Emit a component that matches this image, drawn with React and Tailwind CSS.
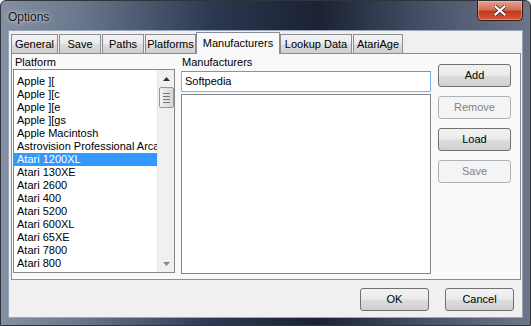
import React from 'react';

const platforms = [
    'Apple ][',
    'Apple ][c',
    'Apple ][e',
    'Apple ][gs',
    'Apple Macintosh',
    'Astrovision Professional Arcade',
    'Atari 1200XL',
    'Atari 130XE',
    'Atari 2600',
    'Atari 400',
    'Atari 5200',
    'Atari 600XL',
    'Atari 65XE',
    'Atari 7800',
    'Atari 800',
];

const tabs = [
    { name: 'General', cls: 'w-[47px] mr-[1px]' },
    { name: 'Save', cls: 'w-[42px] mr-[1px]' },
    { name: 'Paths', cls: 'w-[42px] mr-[1px]' },
    { name: 'Platforms', cls: 'w-[51px]' },
    { name: 'Manufacturers', cls: 'w-[84px]', active: true },
    { name: 'Lookup Data', cls: 'w-[72px] mr-[1px]' },
    { name: 'AtariAge', cls: 'w-[50px]' },
];

const WinButton = ({ children, disabled, className = '' }) => (
    <div
        className={
            'flex items-center justify-center h-[23px] rounded-[3px] border text-[11px] ' +
            (disabled
                ? 'border-[#adb2b5] bg-[#f4f4f4] text-[#838383] '
                : 'border-[#707070] bg-[linear-gradient(180deg,#f2f2f2_0%,#ebebeb_48%,#dddddd_52%,#cfcfcf_100%)] text-black ') +
            className
        }
    >
        {children}
    </div>
);

const App = () => {
    return (
        <div className="w-[531px] h-[326px] overflow-hidden bg-[#f0f0f0] font-['Liberation_Sans',Arial,sans-serif]">
            <div className="w-[531px] h-[326px] flex flex-col rounded-t-[6px] border border-[#30343c] bg-[linear-gradient(90deg,#8490a2_0%,#6a768b_15%,#2c3850_40%,#1a2233_60%,#4a556c_82%,#6d7589_100%)]">
                {/* title bar */}
                <div className="h-[29px] flex items-start justify-between shrink-0">
                    <div className="pl-[7px] pt-[7px] text-[12px] text-[#111] [text-shadow:0_0_6px_rgba(255,255,255,0.7),0_0_2px_rgba(255,255,255,0.6)]">
                        Options
                    </div>
                    <div className="mr-[7px] w-[46px] h-[20px] flex items-center justify-center rounded-b-[5px] border border-t-0 border-[#3d1610] bg-[linear-gradient(180deg,#e6a290_0%,#d2705a_45%,#c3391f_55%,#cf5a36_100%)] shadow-[inset_0_0_0_1px_rgba(255,200,180,0.45)]">
                        <svg width="12" height="11" viewBox="0 0 12 11">
                            <path d="M1 1 L11 10 M11 1 L1 10" stroke="#3a2420" strokeWidth="3.6" strokeLinecap="square" />
                            <path d="M1.5 1.5 L10.5 9.5 M10.5 1.5 L1.5 9.5" stroke="#ffffff" strokeWidth="2.2" strokeLinecap="square" />
                        </svg>
                    </div>
                </div>

                {/* client area */}
                <div className="mx-[7px] flex-1 mb-[7px] border border-[#9aa7b8] bg-[#f0f0f0] flex flex-col">
                    {/* tabs */}
                    <div className="flex items-end h-[22px] pl-[2px]">
                        {tabs.map((t) =>
                            t.active ? (
                                <div
                                    key={t.name}
                                    className={'relative z-10 h-[22px] -mb-px flex justify-center pt-[2px] text-[11px] text-black bg-[#f9f9f9] border border-b-0 border-[#898c95] ' + t.cls}
                                >
                                    {t.name}
                                </div>
                            ) : (
                                <div
                                    key={t.name}
                                    className={'h-[19px] flex items-center justify-center text-[11px] text-black bg-[linear-gradient(180deg,#f3f3f3_0%,#ebebeb_50%,#dddddd_51%,#cfcfcf_100%)] border border-b-0 border-[#898c95] ' + t.cls}
                                >
                                    {t.name}
                                </div>
                            )
                        )}
                    </div>

                    {/* panel */}
                    <div className="ml-[2px] mr-[1px] h-[227px] border border-[#898c95] bg-[#f9f9f9] flex px-[1px] pt-[1px]">
                        {/* platform column */}
                        <div className="w-[162px] flex flex-col">
                            <div className="h-[14px] pl-[2px] text-[11px] leading-[14px] text-black">Platform</div>
                            <div className="h-[204px] border border-[#828790] bg-white flex">
                                <div className="flex-1 flex flex-col pt-[5px] overflow-hidden">
                                    {platforms.map((p) => (
                                        <div
                                            key={p}
                                            className={
                                                'h-[13px] pl-[3px] text-[11px] leading-[13px] whitespace-nowrap ' +
                                                (p === 'Atari 1200XL' ? 'bg-[#3399ff] text-white' : 'text-black')
                                            }
                                        >
                                            {p}
                                        </div>
                                    ))}
                                </div>
                                <div className="w-[17px] bg-[#f0f0f0] flex flex-col items-center border-l border-[#e6e6e6]">
                                    <div className="h-[17px] w-full flex items-center justify-center">
                                        <svg width="7" height="4" viewBox="0 0 7 4">
                                            <path d="M0 4 L3.5 0 L7 4 Z" fill="#333" />
                                        </svg>
                                    </div>
                                    <div className="w-[15px] h-[21px] rounded-[2px] border border-[#979797] bg-[linear-gradient(90deg,#f3f3f3,#e3e3e3_50%,#d6d6d6)] flex flex-col items-center justify-center gap-[2px]">
                                        <div className="w-[7px] h-px bg-[#777]" />
                                        <div className="w-[7px] h-px bg-[#777]" />
                                        <div className="w-[7px] h-px bg-[#777]" />
                                        <div className="w-[7px] h-px bg-[#777]" />
                                    </div>
                                    <div className="flex-1" />
                                    <div className="h-[17px] w-full flex items-center justify-center">
                                        <svg width="7" height="4" viewBox="0 0 7 4">
                                            <path d="M0 0 L7 0 L3.5 4 Z" fill="#888" />
                                        </svg>
                                    </div>
                                </div>
                            </div>
                        </div>

                        {/* manufacturers column */}
                        <div className="ml-[6px] w-[250px] flex flex-col">
                            <div className="h-[14px] pl-[1px] text-[11px] leading-[14px] text-black">Manufacturers</div>
                            <div className="mt-[2px] h-[21px] border border-[#7eb4ea] border-t-[#569de5] bg-white flex items-center pl-[3px] text-[11px] text-black">
                                Softpedia
                            </div>
                            <div className="mt-[2px] h-[180px] border border-[#828790] bg-white" />
                        </div>

                        {/* buttons */}
                        <div className="ml-[7px] w-[73px] flex flex-col gap-[9px] pt-[9px]">
                            <WinButton>Add</WinButton>
                            <WinButton disabled>Remove</WinButton>
                            <WinButton>Load</WinButton>
                            <WinButton disabled>Save</WinButton>
                        </div>
                    </div>

                    {/* bottom */}
                    <div className="flex justify-end gap-[16px] pr-[8px] pt-[8px]">
                        <WinButton className="w-[69px]">OK</WinButton>
                        <WinButton className="w-[69px]">Cancel</WinButton>
                    </div>
                </div>
            </div>
        </div>
    );
};

export default App;
